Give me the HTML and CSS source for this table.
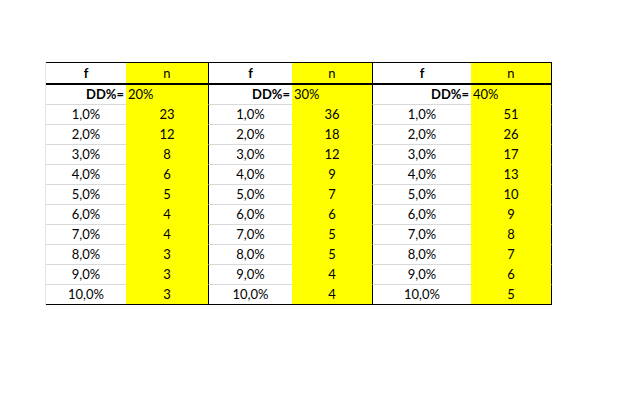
FILE: index.html
```html
<!DOCTYPE html>
<html>
<head>
<meta charset="utf-8">
<link rel="stylesheet" href="styles.css">
</head>
<body>
<div class="sheet">
  <div class="grid">
    <div class="c hd f b">f</div><div class="c hd n end">n</div>
    <div class="c hd f b">f</div><div class="c hd n end">n</div>
    <div class="c hd f b">f</div><div class="c hd n end">n</div>

    <div class="c f b right">DD%=</div><div class="c n end left">20%</div>
    <div class="c f b right">DD%=</div><div class="c n end left">30%</div>
    <div class="c f b right">DD%=</div><div class="c n end left">40%</div>

    <div class="c f">1,0%</div><div class="c n end">23</div><div class="c f">1,0%</div><div class="c n end">36</div><div class="c f">1,0%</div><div class="c n end">51</div>
    <div class="c f">2,0%</div><div class="c n end">12</div><div class="c f">2,0%</div><div class="c n end">18</div><div class="c f">2,0%</div><div class="c n end">26</div>
    <div class="c f">3,0%</div><div class="c n end">8</div><div class="c f">3,0%</div><div class="c n end">12</div><div class="c f">3,0%</div><div class="c n end">17</div>
    <div class="c f">4,0%</div><div class="c n end">6</div><div class="c f">4,0%</div><div class="c n end">9</div><div class="c f">4,0%</div><div class="c n end">13</div>
    <div class="c f">5,0%</div><div class="c n end">5</div><div class="c f">5,0%</div><div class="c n end">7</div><div class="c f">5,0%</div><div class="c n end">10</div>
    <div class="c f">6,0%</div><div class="c n end">4</div><div class="c f">6,0%</div><div class="c n end">6</div><div class="c f">6,0%</div><div class="c n end">9</div>
    <div class="c f">7,0%</div><div class="c n end">4</div><div class="c f">7,0%</div><div class="c n end">5</div><div class="c f">7,0%</div><div class="c n end">8</div>
    <div class="c f">8,0%</div><div class="c n end">3</div><div class="c f">8,0%</div><div class="c n end">5</div><div class="c f">8,0%</div><div class="c n end">7</div>
    <div class="c f">9,0%</div><div class="c n end">3</div><div class="c f">9,0%</div><div class="c n end">4</div><div class="c f">9,0%</div><div class="c n end">6</div>
    <div class="c f last">10,0%</div><div class="c n end last">3</div><div class="c f last">10,0%</div><div class="c n end last">4</div><div class="c f last">10,0%</div><div class="c n end last">5</div>
  </div>
</div>
</body>
</html>
```
FILE: styles.css
```css
html, body {
  margin: 0;
  padding: 0;
  background: #ffffff;
}

.sheet {
  padding: 62px 0 0 45px;
}

.grid {
  display: grid;
  grid-template-columns: 80px 83px 83px 81px 98px 81px;
  width: 506px;
  border-left: 1px solid #e6e6e6;
  font-family: Lato, "Liberation Sans", sans-serif;
  font-size: 13px;
  color: #000;
}

.c {
  box-sizing: border-box;
  height: 20px;
  line-height: 19px;
  text-align: center;
  border-bottom: 1px solid #d9d9d9;
  white-space: nowrap;
}

.f {
  background: #ffffff;
}

.n {
  background: #ffff00;
  border-bottom-color: transparent;
}

.end {
  border-right: 1px solid #000;
}

.hd {
  height: 23px;
  border-top: 1px solid #000;
  border-bottom: 2px solid #000;
  padding-top: 1px;
}

.b {
  font-weight: bold;
}

.right {
  text-align: right;
  padding-right: 2px;
}

.left {
  text-align: left;
  padding-left: 2px;
}

.last {
  border-bottom: 1px solid #000;
}
```
